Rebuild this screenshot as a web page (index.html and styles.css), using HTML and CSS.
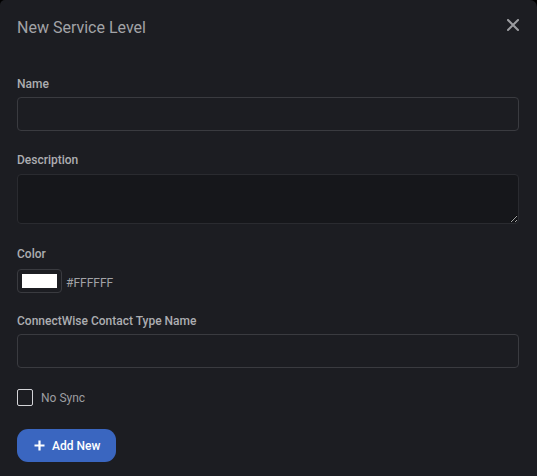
FILE: index.html
```html
<!DOCTYPE html>
<html>
<head>
<meta charset="utf-8">
<link rel="stylesheet" href="styles.css">
</head>
<body>
<div class="dialog">
  <div class="header">
    <h1 class="title">New Service Level</h1>
    <button class="close" aria-label="Close">
      <svg width="12" height="12" viewBox="0 0 12 12"><path d="M1 1L11 11M11 1L1 11" stroke="#9b9ca0" stroke-width="2" stroke-linecap="square"/></svg>
    </button>
  </div>
  <div class="form">
    <div class="field">
      <label class="label">Name</label>
      <input class="input" type="text">
    </div>
    <div class="field field-tall">
      <label class="label">Description</label>
      <textarea class="textarea"></textarea>
    </div>
    <div class="field field-color">
      <label class="label">Color</label>
      <div class="color-row">
        <div class="swatch"><div class="swatch-fill"></div></div>
        <span class="hex">#FFFFFF</span>
      </div>
    </div>
    <div class="field">
      <label class="label">ConnectWise Contact Type Name</label>
      <input class="input" type="text">
    </div>
    <label class="check-row">
      <span class="checkbox"></span>
      <span class="check-label">No Sync</span>
    </label>
    <div class="actions">
      <button class="btn-primary">
        <svg width="11" height="11" viewBox="0 0 11 11"><path d="M5.5 0.5V10.5M0.5 5.5H10.5" stroke="#ffffff" stroke-width="2.2"/></svg>
        <span>Add New</span>
      </button>
    </div>
  </div>
</div>
</body>
</html>
```
FILE: styles.css
```css
html {
  background: #000;
}
body {
  margin: 0;
  font-family: Roboto, "Liberation Sans", Arial, sans-serif;
}
.dialog {
  box-sizing: border-box;
  width: 537px;
  height: 476px;
  background: #1c1d22;
  border-radius: 5px 7px 0 0;
  padding: 18px 18px 0 17px;
}
.header {
  display: flex;
  justify-content: space-between;
  align-items: flex-start;
}
.title {
  margin: 0;
  font-size: 16px;
  line-height: 20px;
  font-weight: 400;
  color: #a2a3a7;
}
.close {
  background: none;
  border: 0;
  padding: 0;
  margin: 1px 0 0 0;
  width: 12px;
  height: 12px;
  display: flex;
  cursor: pointer;
}
.form {
  display: flex;
  flex-direction: column;
  padding-top: 38px;
}
.field {
  display: flex;
  flex-direction: column;
  gap: 5px;
  margin-bottom: 21px;
}
.field-tall {
  margin-bottom: 22px;
}
.field-color {
  margin-bottom: 20px;
}
.label {
  font-size: 12px;
  line-height: 16px;
  font-weight: 500;
  color: #acadb1;
}
.input {
  box-sizing: border-box;
  height: 34px;
  width: 100%;
  background: #1c1d22;
  border: 1px solid #3a3b40;
  border-radius: 4px;
  outline: none;
}
.textarea {
  box-sizing: border-box;
  height: 50px;
  width: 100%;
  background: #16171b;
  border: 1px solid #2a2b30;
  border-radius: 4px;
  margin-top: 1px;
  resize: vertical;
  outline: none;
}
.color-row {
  display: flex;
  align-items: center;
  gap: 4px;
  margin-top: 2px;
}
.swatch {
  box-sizing: border-box;
  width: 45px;
  height: 24px;
  border: 1px solid #3a3b40;
  border-radius: 4px;
  padding: 4px;
}
.swatch-fill {
  width: 100%;
  height: 100%;
  background: #ffffff;
}
.hex {
  font-size: 12px;
  line-height: 16px;
  color: #a2a3a7;
  margin-top: 4px;
}
.check-row {
  display: flex;
  align-items: center;
  gap: 8px;
}
.checkbox {
  box-sizing: border-box;
  width: 16px;
  height: 17px;
  border: 1px solid #d4d4d8;
  border-radius: 2px;
}
.check-label {
  font-size: 12px;
  line-height: 16px;
  color: #9c9da1;
}
.actions {
  display: flex;
  margin-top: 23px;
}
.btn-primary {
  display: flex;
  align-items: center;
  gap: 7px;
  box-sizing: border-box;
  width: 99px;
  height: 33px;
  padding: 0 0 0 17px;
  border: 0;
  border-radius: 11px;
  background: #3a66c0;
  color: #ffffff;
  font-family: Roboto, "Liberation Sans", Arial, sans-serif;
  font-size: 12px;
  font-weight: 500;
  cursor: pointer;
}
```
